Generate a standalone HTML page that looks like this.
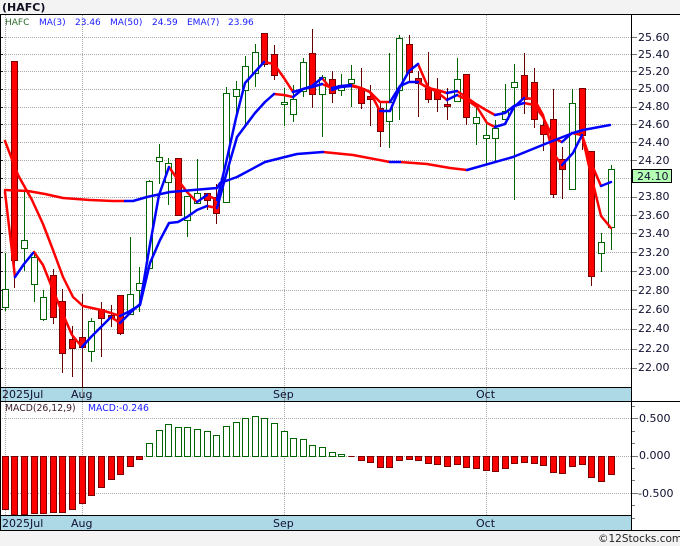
<!DOCTYPE html>
<html><head><meta charset="utf-8"><style>
html,body{margin:0;padding:0;background:#f3f3f3;width:680px;height:546px;overflow:hidden}
svg{position:absolute;left:0;top:0;display:block}
text{font-family:"DejaVu Sans",sans-serif;white-space:pre}
.p{font-size:11px;fill:#101030}
.l{font-size:9px}
.m{font-size:9.3px}
</style></head><body>
<svg width="680" height="546" viewBox="0 0 680 546" xmlns="http://www.w3.org/2000/svg">
<rect x="0" y="14" width="680" height="517" fill="#fff"/>
<text x="2" y="11" font-size="11" font-weight="bold" fill="#111122">(HAFC)</text>

<!-- grid -->
<path fill="none" stroke="#a8a8a8" stroke-dasharray="1 1" d="M0 37.5H632M0 54.5H632M0 71.5H632M0 89.5H632M0 107.5H632M0 124.5H632M0 142.5H632M0 160.5H632M0 178.5H632M0 197.5H632M0 215.5H632M0 233.5H632M0 252.5H632M0 271.5H632M0 290.5H632M0 309.5H632M0 329.5H632M0 349.5H632M0 368.5H632M5.5 15V387M82.5 15V387M284.5 15V387M486.5 15V387M0 418.5H632M0 456.5H632M0 493.5H632M5.5 402V515M82.5 402V515M284.5 402V515M486.5 402V515"/>

<!-- wicks -->
<path fill="none" stroke="#006400" d="M5.5 253V311M24.5 192V271M34.5 253V302M43.5 290V321M91.5 318V362M130.5 237V314M139.5 267V312M149.5 180V268M159.5 144V184M168.5 158V205M187.5 196V237M197.5 159V204M226.5 87V202M236.5 81V117M245.5 56V127M255.5 44V87M284.5 88V126M293.5 85V122M303.5 58V97M322.5 75V137M341.5 74V96M351.5 65V107M389.5 53V148M399.5 35V120M457.5 58V101M476.5 108V145M486.5 123V165M495.5 120V162M505.5 84V119M514.5 64V200M572.5 89V189M601.5 233V272M611.5 165V250"/>
<path fill="none" stroke="#660000" d="M14.5 61V288M53.5 269V324M62.5 289V373M72.5 326V377M82.5 294V387M101.5 302V357M111.5 305V327M120.5 295V335M178.5 158V215M207.5 193V210M216.5 184V224M264.5 33V67M274.5 45V80M312.5 29V108M332.5 71V103M361.5 68V109M370.5 85V126M380.5 102V147M409.5 35V81M418.5 71V117M428.5 52V103M437.5 78V112M447.5 88V120M466.5 74V125M524.5 53V114M534.5 68V128M543.5 116V151M553.5 89V198M562.5 147V199M582.5 88V150M591.5 151V286"/>

<!-- green bodies -->
<path fill="#fff" stroke="#006400" d="M2.5 289.5h6v18h-6zM21.5 240.5h6v8h-6zM31.5 257.5h6v27h-6zM40.5 297.5h6v22h-6zM88.5 321.5h6v30h-6zM127.5 294.5h6v20h-6zM136.5 283.5h6v7h-6zM146.5 181.5h6v87h-6zM156.5 157.5h6v4h-6zM165.5 163.5h6v19h-6zM184.5 196.5h6v24h-6zM194.5 193.5h6v10h-6zM223.5 93.5h6v109h-6zM233.5 89.5h6v7h-6zM242.5 66.5h6v24h-6zM252.5 52.5h6v21h-6zM281.5 102.5h6v2h-6zM290.5 99.5h6v15h-6zM300.5 62.5h6v29h-6zM319.5 77.5h6v17h-6zM338.5 85.5h6v5h-6zM348.5 79.5h6v4h-6zM386.5 102.5h6v19h-6zM396.5 38.5h6v52h-6zM454.5 79.5h6v22h-6zM473.5 117.5h6v6h-6zM483.5 135.5h6v3h-6zM492.5 128.5h6v10h-6zM502.5 111.5h6v8h-6zM511.5 82.5h6v5h-6zM569.5 103.5h6v86h-6zM598.5 242.5h6v11h-6zM608.5 169.5h6v58h-6z"/>
<!-- red bodies -->
<path fill="#ff0000" stroke="#7a0000" d="M11.5 61.5h6v199h-6zM50.5 275.5h6v42h-6zM59.5 301.5h6v52h-6zM69.5 339.5h6v9h-6zM79.5 337.5h6v10h-6zM98.5 309.5h6v9h-6zM108.5 315.5h6v2h-6zM117.5 295.5h6v38h-6zM175.5 158.5h6v57h-6zM204.5 193.5h6v7h-6zM213.5 197.5h6v16h-6zM261.5 33.5h6v31h-6zM271.5 54.5h6v21h-6zM309.5 53.5h6v41h-6zM329.5 79.5h6v14h-6zM358.5 88.5h6v15h-6zM367.5 96.5h6v3h-6zM377.5 108.5h6v23h-6zM406.5 44.5h6v28h-6zM415.5 78.5h6v5h-6zM425.5 88.5h6v11h-6zM434.5 90.5h6v9h-6zM444.5 104.5h6v2h-6zM463.5 74.5h6v43h-6zM521.5 75.5h6v24h-6zM531.5 82.5h6v37h-6zM540.5 125.5h6v9h-6zM550.5 119.5h6v75h-6zM559.5 159.5h6v10h-6zM579.5 88.5h6v47h-6zM588.5 151.5h6v125h-6z"/>

<!-- moving averages -->
<g fill="none" stroke-width="2.5" stroke-linejoin="round" stroke-linecap="round">
<g stroke="#ff0000">
<polyline points="5,190 28,191 45,194 63,198 90,200 113,201 125,201"/>
<polyline points="323,152 353,155 390,162"/>
<polyline points="400,162 427,164 450,168 467,170"/>
<polyline points="5,141 18,175 32,200 43,224 53,250 63,277 73,297 83,306 92,308 101,310 111,313 120,316"/>
<polyline points="207,206 217,208"/>
<polyline points="274,94 284,95 293,97"/>
<polyline points="322,84 332,88"/>
<polyline points="351,85 361,88 370,92 380,102 390,102"/>
<polyline points="418,82 428,88 437,90 447,93"/>
<polyline points="457,91 466,97 476,104 486,110 495,115"/>
<polyline points="524,103 534,105 543,117 553,138 562,142"/>
<polyline points="572,133 582,135 591,175 601,216 611,228"/>
<polyline points="5,192 15,277"/>
<polyline points="34,252 43,265 53,290 62,312 72,335 82,347"/>
<polyline points="111,317 120,323"/>
<polyline points="169,167 178,180 187,192 197,202"/>
<polyline points="207,195 217,200"/>
<polyline points="264,62 274,64 284,78 293,92"/>
<polyline points="322,78 332,90"/>
<polyline points="351,86 361,88 370,92 380,111"/>
<polyline points="418,64 428,87 437,92 447,100"/>
<polyline points="457,95 467,100 477,107 487,123 495,127"/>
<polyline points="524,98 534,99 543,115 553,153 562,165"/>
<polyline points="582,135 592,165 601,186"/>
</g>
<g stroke="#0000ff">
<polyline points="125,201 133,201 147,197 170,192 217,188 220,183 237,177 265,162 297,154 323,152"/>
<polyline points="390,162 400,162"/>
<polyline points="467,170 513,157 550,142 573,133 583,130 610,125"/>
<polyline points="120,316 130,311 140,305 150,263 160,240 169,223 178,222 187,217 197,210 207,206"/>
<polyline points="217,208 226,175 237,137 246,125 255,113 265,102 274,94"/>
<polyline points="293,97 303,89 312,87 322,84"/>
<polyline points="332,88 341,86 351,85"/>
<polyline points="390,102 400,86 409,82 418,82"/>
<polyline points="447,93 457,91"/>
<polyline points="495,115 505,113 514,106 524,103"/>
<polyline points="562,142 572,133"/>
<polyline points="15,277 24,264 33,253"/>
<polyline points="82,347 91,337 101,327 111,317"/>
<polyline points="120,323 130,313 140,304 149,250 159,195 169,167"/>
<polyline points="197,202 207,195"/>
<polyline points="217,200 226,163 236,118 245,83 255,72 264,62"/>
<polyline points="293,92 300,90 312,86 322,78"/>
<polyline points="332,90 341,87 351,86"/>
<polyline points="380,111 390,111 400,87 409,71 418,64"/>
<polyline points="447,100 457,95"/>
<polyline points="495,127 505,124 514,107 524,98"/>
<polyline points="562,165 573,153 582,135"/>
<polyline points="601,186 611,182"/>
</g>
</g>

<!-- legend -->
<text class="l" x="5" y="25" fill="#2c6a2c">HAFC</text>
<text class="l" x="39" y="25" fill="#1a1aff">MA(3)</text>
<text class="l" x="75" y="25" fill="#1a1aff">23.46</text>
<text class="l" x="110" y="25" fill="#1a1aff">MA(50)</text>
<text class="l" x="152" y="25" fill="#1a1aff">24.59</text>
<text class="l" x="187" y="25" fill="#1a1aff">EMA(7)</text>
<text class="l" x="228" y="25" fill="#1a1aff">23.96</text>

<!-- MACD histogram -->
<path fill="#fff" stroke="#006400" d="M146.5 443.5h6v13h-6zM156.5 430.5h6v26h-6zM165.5 424.5h6v32h-6zM175.5 427.5h6v29h-6zM184.5 427.5h6v29h-6zM194.5 429.5h6v27h-6zM204.5 431.5h6v25h-6zM213.5 435.5h6v21h-6zM223.5 426.5h6v30h-6zM233.5 422.5h6v34h-6zM242.5 418.5h6v38h-6zM252.5 416.5h6v40h-6zM261.5 418.5h6v38h-6zM271.5 423.5h6v33h-6zM281.5 431.5h6v25h-6zM290.5 438.5h6v18h-6zM300.5 439.5h6v17h-6zM309.5 445.5h6v11h-6zM319.5 447.5h6v9h-6zM329.5 452.5h6v4h-6zM338.5 454.5h6v2h-6z"/>
<path fill="#ff0000" stroke="#7a0000" d="M2.5 456.5h6v53h-6zM11.5 456.5h6v58.5h-6zM21.5 456.5h6v58h-6zM31.5 456.5h6v57h-6zM40.5 456.5h6v57h-6zM50.5 456.5h6v56h-6zM59.5 456.5h6v56h-6zM69.5 456.5h6v53h-6zM79.5 456.5h6v47h-6zM88.5 456.5h6v39h-6zM98.5 456.5h6v31h-6zM108.5 456.5h6v23h-6zM117.5 456.5h6v18h-6zM127.5 456.5h6v10h-6zM136.5 456.5h6v3h-6zM348.5 456.5h6zM358.5 456.5h6v4h-6zM367.5 456.5h6v6h-6zM377.5 456.5h6v11h-6zM386.5 456.5h6v11h-6zM396.5 456.5h6v4h-6zM406.5 456.5h6v3h-6zM415.5 456.5h6v4h-6zM425.5 456.5h6v7h-6zM434.5 456.5h6v8h-6zM444.5 456.5h6v10h-6zM454.5 456.5h6v8h-6zM463.5 456.5h6v11h-6zM473.5 456.5h6v12h-6zM483.5 456.5h6v14h-6zM492.5 456.5h6v15h-6zM502.5 456.5h6v12h-6zM511.5 456.5h6v7h-6zM521.5 456.5h6v6h-6zM531.5 456.5h6v7h-6zM540.5 456.5h6v9h-6zM550.5 456.5h6v16h-6zM559.5 456.5h6v17h-6zM569.5 456.5h6v10h-6zM579.5 456.5h6v8h-6zM588.5 456.5h6v21h-6zM598.5 456.5h6v25h-6zM608.5 456.5h6v18h-6z"/>
<text class="m" x="5" y="411" fill="#3a1a2a">MACD(26,12,9)</text>
<text class="m" x="88" y="411" fill="#1a1aff">MACD:-0.246</text>

<!-- axis bands -->
<rect x="0" y="387" width="632" height="14" fill="#add8e6"/>
<rect x="0" y="515" width="632" height="15" fill="#add8e6"/>
<path fill="none" stroke="#999" d="M5.5 387V401M82.5 387V401M284.5 387V401M486.5 387V401"/>
<text class="p" x="2" y="398">2025Jul</text>
<text class="p" x="71" y="398">Aug</text>
<text class="p" x="273" y="398">Sep</text>
<text class="p" x="476" y="398">Oct</text>
<text class="p" x="2" y="527">2025Jul</text>
<text class="p" x="71" y="527">Aug</text>
<text class="p" x="273" y="527">Sep</text>
<text class="p" x="476" y="527">Oct</text>

<!-- frame -->
<path fill="none" stroke="#000" d="M0 14.5H680M0.5 14V531M0 387.5H632M0 401.5H680M0 515.5H632M0 530.5H680M631.5 14V531"/>
<!-- ticks -->
<path fill="none" stroke="#222" d="M1 37.5h2M1 54.5h2M1 71.5h2M1 89.5h2M1 107.5h2M1 124.5h2M1 142.5h2M1 160.5h2M1 178.5h2M1 197.5h2M1 215.5h2M1 233.5h2M1 252.5h2M1 271.5h2M1 290.5h2M1 309.5h2M1 329.5h2M1 349.5h2M1 368.5h2"/>
<path fill="none" stroke="#777" d="M632 37.5h5M632 54.5h5M632 71.5h5M632 89.5h5M632 107.5h5M632 124.5h5M632 142.5h5M632 160.5h5M632 197.5h5M632 215.5h5M632 233.5h5M632 252.5h5M632 271.5h5M632 290.5h5M632 309.5h5M632 329.5h5M632 349.5h5M632 368.5h5M632 406.5h3M632 418.5h6M632 431.5h3M632 443.5h3M632 456.5h6M632 468.5h3M632 480.5h3M632 493.5h6M632 505.5h3M632 518.5h3"/>

<!-- price labels -->
<text class="p" x="638" y="41">25.60</text>
<text class="p" x="638" y="58">25.40</text>
<text class="p" x="638" y="75">25.20</text>
<text class="p" x="638" y="92">25.00</text>
<text class="p" x="638" y="110">24.80</text>
<text class="p" x="638" y="128">24.60</text>
<text class="p" x="638" y="146">24.40</text>
<text class="p" x="638" y="164">24.20</text>
<rect x="632.5" y="169.5" width="39" height="13" fill="#b4ffb4" stroke="#000"/>
<text class="p" x="637" y="180">24.10</text>
<text class="p" x="638" y="200">23.80</text>
<text class="p" x="638" y="219">23.60</text>
<text class="p" x="638" y="237">23.40</text>
<text class="p" x="638" y="256">23.20</text>
<text class="p" x="638" y="275">23.00</text>
<text class="p" x="638" y="294">22.80</text>
<text class="p" x="638" y="313">22.60</text>
<text class="p" x="638" y="332">22.40</text>
<text class="p" x="638" y="352">22.20</text>
<text class="p" x="638" y="371">22.00</text>
<text class="p" x="639" y="422">0.500</text>
<text class="p" x="639" y="459">0.000</text>
<text class="p" x="638" y="497">-0.500</text>

<text x="598" y="542" font-size="10.5" fill="#222">©12Stocks.com</text>
</svg>
</body></html>
